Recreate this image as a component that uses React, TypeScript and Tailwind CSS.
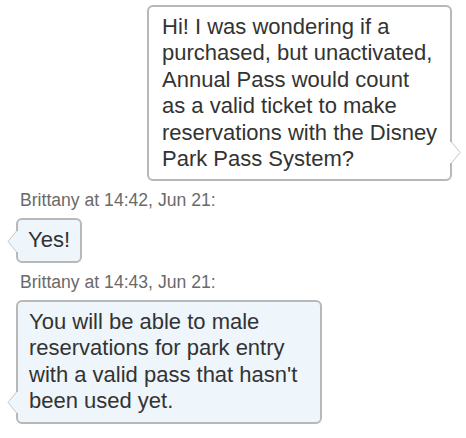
import React from "react";

const Tail = ({ side, fill, className }: { side: "left" | "right"; fill: string; className: string }) => (
  <svg
    width="12"
    height="21"
    viewBox="0 0 12 21"
    className={`absolute ${className}`}
    style={side === "left" ? { transform: "scaleX(-1)" } : undefined}
  >
    <polygon points="0,0 2.5,0 11,10.5 2.5,21 0,21" fill={fill} />
    <polyline points="2.5,0 11,10.5 2.5,21" fill="none" stroke="#c6c6c6" strokeWidth="1" />
  </svg>
);

const Label = ({ children }: { children: React.ReactNode }) => (
  <div className="pl-[4px] pt-[9px] pb-[7px] text-[17.6px] leading-[1.2] text-[#6a6a6a]">{children}</div>
);

const App = () => {
  return (
    <div
      className="w-[466px] h-[438px] bg-white overflow-hidden pt-[5px] pl-[16px] pr-[14px] flex flex-col"
      style={{ fontFamily: '"Liberation Sans", Arial, sans-serif' }}
    >
      <div className="self-end relative w-[305px] bg-white border-2 border-[#b8b8b8] rounded-[6px] pl-[13px] pr-[10px] py-[7px] text-[22px] leading-[1.2] text-[#333333]">
        Hi! I was wondering if a<br />
        purchased, but unactivated,<br />
        Annual Pass would count<br />
        as a valid ticket to make<br />
        reservations with the Disney<br />
        Park Pass System?
        <Tail side="right" fill="#ffffff" className="right-[-11px] bottom-[16px]" />
      </div>

      <Label>Brittany at 14:42, Jun 21:</Label>

      <div className="self-start relative bg-[#eef5fb] border-2 border-[#b8b8b8] rounded-[6px] px-[10px] py-[7px] text-[22px] leading-[1.2] text-[#333333]">
        Yes!
        <Tail side="left" fill="#eef5fb" className="left-[-11px] bottom-[9px]" />
      </div>

      <Label>Brittany at 14:43, Jun 21:</Label>

      <div className="self-start relative w-[306px] bg-[#eef5fb] border-2 border-[#b8b8b8] rounded-[6px] px-[11px] py-[7px] text-[22px] leading-[1.2] text-[#333333]">
        You will be able to male<br />
        reservations for park entry<br />
        with a valid pass that hasn't<br />
        been used yet.
        <Tail side="left" fill="#eef5fb" className="left-[-11px] bottom-[9px]" />
      </div>
    </div>
  );
};

export default App;
